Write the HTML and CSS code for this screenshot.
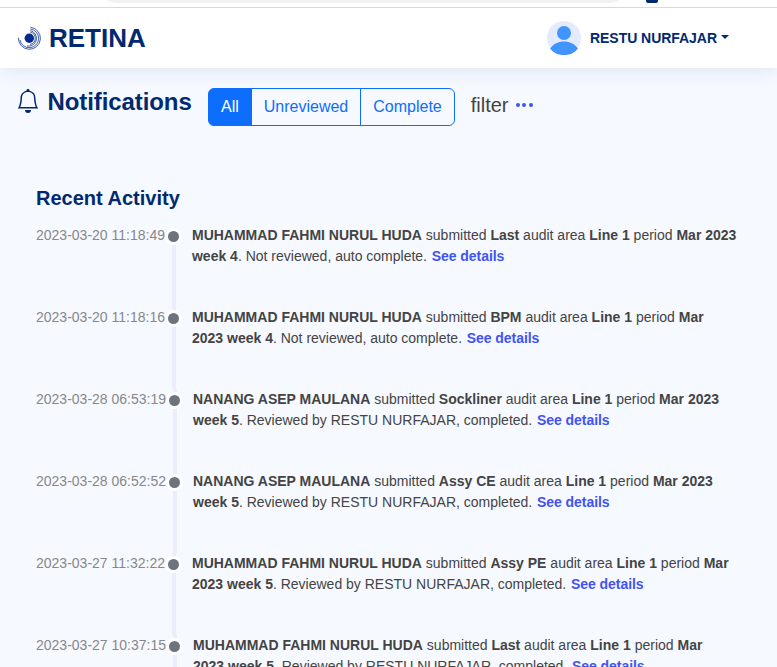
FILE: index.html
```html
<!DOCTYPE html>
<html lang="en">
<head>
<meta charset="utf-8">
<title>Retina</title>
<link rel="stylesheet" href="styles.css">
</head>
<body>
<div class="toolbar"><div class="address"></div><div class="extension"></div></div>
<header class="header">
  <div class="brand">
    <svg class="logo" width="24" height="24" viewBox="0 0 24 24" fill="none" stroke="#012b8c" stroke-width=".75">
      <circle cx="11.300" cy="12.200" r="4.700" fill="#012b8c" stroke="none"/>
      <path d="M12.500 1.300A11 11 0 1 1 .400 11.800"/>
      <path d="M12.300 3A9.400 9.400 0 1 1 2 14"/>
      <path d="M12.300 4.600A7.800 7.800 0 0 1 9 20"/>
      <path d="M12.300 6.200A6.200 6.200 0 0 1 12 18.400"/>
    </svg>
    <span>RETINA</span>
  </div>
  <div class="profile">
    <svg width="34" height="34" viewBox="0 0 34 34">
      <circle cx="17" cy="17" r="17" fill="#e4eaff"/>
      <circle cx="17" cy="12" r="7" fill="#4294ff"/>
      <path d="M3 27.500C6.500 23 11 20.500 17 20.500s10.500 2.500 14 7C27.500 32 23 34 17 34S6.500 32 3 27.500z" fill="#4294ff"/>
    </svg>
    <span class="name">RESTU NURFAJAR</span>
    <span class="caret"></span>
  </div>
</header>
<main>
  <div class="titlebar">
    <svg class="bell" width="24" height="24" viewBox="0 0 16 16" fill="#012970"><path d="M8 16a2 2 0 0 0 2-2H6a2 2 0 0 0 2 2zM8 1.918l-.797.161A4.002 4.002 0 0 0 4 6c0 .628-.134 2.197-.459 3.742-.16.767-.376 1.566-.663 2.258h10.244c-.287-.692-.502-1.490-.663-2.258C12.134 8.197 12 6.628 12 6a4.002 4.002 0 0 0-3.203-3.920L8 1.917zM14.220 12c.223.447.481.801.780 1H1c.299-.199.557-.553.780-1C2.680 10.200 3 6.880 3 6c0-2.420 1.720-4.440 4.005-4.901a1 1 0 1 1 1.990 0A5.002 5.002 0 0 1 13 6c0 .880.320 4.200 1.220 6z"/></svg>
    <h1>Notifications</h1>
    <div class="group"><button class="active">All</button><button class="middle">Unreviewed</button><button>Complete</button></div>
    <span class="filter">filter</span>
    <span class="dots"><i></i><i></i><i></i></span>
  </div>
  <section class="activity">
    <h2>Recent Activity</h2>
    <div class="item"><time>2023-03-20 11:18:49</time><div class="rail"><span class="dot"></span></div><p><b>MUHAMMAD FAHMI NURUL HUDA</b> submitted <b>Last</b> audit area <b>Line 1</b> period <b>Mar 2023<br>week 4</b>. Not reviewed, auto complete. <a>See details</a></p></div>
    <div class="item"><time>2023-03-20 11:18:16</time><div class="rail"><span class="dot"></span></div><p><b>MUHAMMAD FAHMI NURUL HUDA</b> submitted <b>BPM</b> audit area <b>Line 1</b> period <b>Mar<br>2023 week 4</b>. Not reviewed, auto complete. <a>See details</a></p></div>
    <div class="item"><time>2023-03-28 06:53:19</time><div class="rail"><span class="dot"></span></div><p><b>NANANG ASEP MAULANA</b> submitted <b>Sockliner</b> audit area <b>Line 1</b> period <b>Mar 2023<br>week 5</b>. Reviewed by RESTU NURFAJAR, completed. <a>See details</a></p></div>
    <div class="item"><time>2023-03-28 06:52:52</time><div class="rail"><span class="dot"></span></div><p><b>NANANG ASEP MAULANA</b> submitted <b>Assy CE</b> audit area <b>Line 1</b> period <b>Mar 2023<br>week 5</b>. Reviewed by RESTU NURFAJAR, completed. <a>See details</a></p></div>
    <div class="item"><time>2023-03-27 11:32:22</time><div class="rail"><span class="dot"></span></div><p><b>MUHAMMAD FAHMI NURUL HUDA</b> submitted <b>Assy PE</b> audit area <b>Line 1</b> period <b>Mar<br>2023 week 5</b>. Reviewed by RESTU NURFAJAR, completed. <a>See details</a></p></div>
    <div class="item"><time>2023-03-27 10:37:15</time><div class="rail"><span class="dot"></span></div><p><b>MUHAMMAD FAHMI NURUL HUDA</b> submitted <b>Last</b> audit area <b>Line 1</b> period <b>Mar<br>2023 week 5</b>. Reviewed by RESTU NURFAJAR, completed. <a>See details</a></p></div>
  </section>
</main>
</body>
</html>
```
FILE: styles.css
```css
* { box-sizing: border-box; }
html, body { height: 667px; overflow: hidden; }
body { margin: 0; background: #f6f9ff; color: #444; font-family: "Liberation Sans", Arial, sans-serif; font-size: 14px; }
h1, h2, p { margin: 0; }
.toolbar { position: relative; z-index: 1; height: 8px; background: #fff; border-bottom: 1px solid #d9d9da; display: flex; align-items: flex-start; padding-left: 107px; }
.address { width: 512px; height: 3px; background: #f1f2f4; border-radius: 0 0 12px 12px / 0 0 3px 3px; }
.extension { width: 12px; height: 3px; margin-left: 27px; background: #012970; border-radius: 0 0 2px 2px; }
.header { height: 60px; background: #fff; box-shadow: 0 2px 20px rgba(1, 41, 112, .1); display: flex; align-items: center; justify-content: space-between; padding: 0 48px 0 18px; color: #012970; font-weight: 700; }
.brand { display: flex; align-items: center; gap: 7px; font-size: 26px; line-height: 30px; }
.profile { display: flex; align-items: center; }
.name { margin-left: 9px; letter-spacing: -.04px; }
.caret { margin: -3px 0 0 4px; border: 4px solid transparent; border-top-color: #012970; border-bottom: 0; }
.titlebar { height: 38px; margin: 20px 0 0 16px; display: flex; align-items: flex-start; }
.bell { margin-top: 1px; }
h1 { width: 145px; margin-left: 7.500px; font-size: 24px; line-height: 28px; letter-spacing: -.09px; color: #012970; }
.group { display: flex; margin-left: 15.500px; }
button { height: 38px; padding: 0 12px; margin: 0 0 0 -1px; border: 1px solid #0d6efd; background: transparent; color: #0d6efd; font: 16px/24px "Liberation Sans", Arial, sans-serif; }
button:first-child { margin-left: 0; border-radius: 6px 0 0 6px; }
button:last-child { padding-left: 12.600px; border-radius: 0 6px 6px 0; }
button.middle { padding-right: 11.400px; }
button.active { background: #0d6efd; color: #fff; }
.filter { margin-left: 16px; font-size: 20px; line-height: 34px; }
.dots { display: flex; gap: 2.500px; margin: 15px 0 0 7px; }
.dots i { width: 4px; height: 4px; border-radius: 50%; background: #4154f1; }
.activity { padding: 60px 20px 0 36px; }
h2 { font-size: 20px; line-height: 24px; color: #012970; margin-bottom: 15px; }
.item { display: flex; height: 82px; line-height: 21px; white-space: nowrap; }
time { color: #888; }
.rail { width: 17px; display: flex; justify-content: center; background: linear-gradient(#ebedfd, #ebedfd) 7px 0 / 4px 100% no-repeat; }
h2 + .item .rail { background-position: 7px 12px; }
.dot { flex: none; width: 17px; height: 17px; margin-top: 3px; border: 3px solid #fff; border-radius: 50%; background: #6c757d; }
.item p { margin-left: 10px; }
.item a { margin-left: .8px; color: #4154f1; font-weight: 700; letter-spacing: -.05px; }
```
